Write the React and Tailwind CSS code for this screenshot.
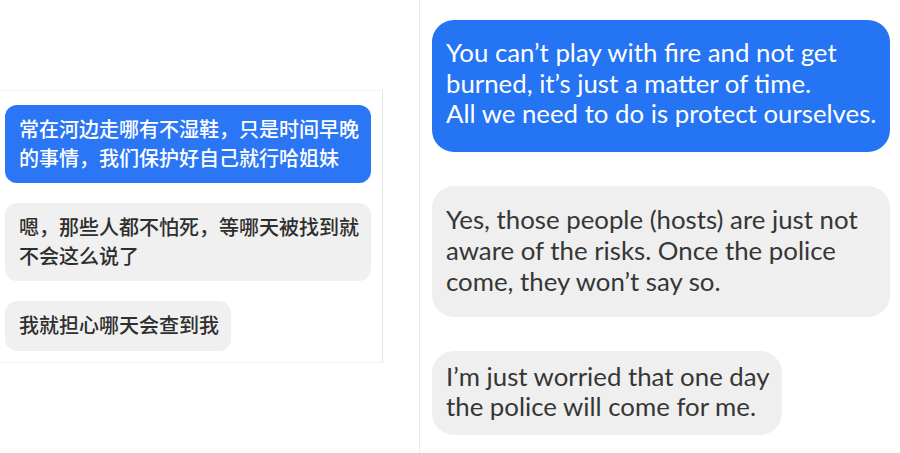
import React from 'react';

const zh = { fontFamily: '"Noto Sans CJK SC", "Noto Sans", sans-serif' };
const en = { fontFamily: 'Lato, "Open Sans", sans-serif' };

const App = () => {
  return (
    <div className="flex w-[900px] h-[453px] bg-white overflow-hidden">
      {/* left: original screenshot */}
      <div className="w-[420px] shrink-0 border-r border-[#ececec] pt-[90px]">
        <div className="w-[383px] h-[273px] border-r border-y border-[#e4e4e4] border-t-[#f3f3f3] border-b-[#f3f3f3] pt-[14px] pl-[5px] flex flex-col gap-[20px] font-medium whitespace-nowrap" style={zh}>
          <div className="w-[366px] h-[78px] bg-[#2b76f5] rounded-[12px] pl-[14px] py-[9px] text-white text-[20px] leading-[29px]">
            常在河边走哪有不湿鞋，只是时间早晚<br />的事情，我们保护好自己就行哈姐妹
          </div>
          <div className="w-[366px] h-[78px] bg-[#f0f0f0] rounded-[12px] pl-[14px] py-[9px] text-[#2e2e2e] text-[20px] leading-[29px]">
            嗯，那些人都不怕死，等哪天被找到就<br />不会这么说了
          </div>
          <div className="w-[226px] h-[50px] bg-[#f0f0f0] rounded-[12px] pl-[14px] py-[9px] text-[#2e2e2e] text-[20px] leading-[29px]">
            我就担心哪天会查到我
          </div>
        </div>
      </div>

      {/* right: translation */}
      <div className="flex-1 pl-[12px] pt-[20px] flex flex-col gap-[34px] whitespace-nowrap" style={en}>
        <div className="w-[458px] h-[132px] bg-[#2574f4] rounded-[22px] pl-[14px] pt-[17px] text-white text-[25.8px] leading-[30.5px]">
          You can’t play with fire and not get<br />burned, it’s just a matter of time.<br />All we need to do is protect ourselves.
        </div>
        <div className="w-[458px] h-[131px] bg-[#efefef] rounded-[22px] pl-[14px] pt-[18px] text-[#363636] text-[25.8px] leading-[31px]">
          Yes, those people (hosts) are just not<br />aware of the risks. Once the police<br />come, they won’t say so.
        </div>
        <div className="w-[350px] h-[84px] bg-[#efefef] rounded-[22px] pl-[14px] pt-[10px] text-[#363636] text-[25.8px] leading-[30px]">
          I’m just worried that one day<br />the police will come for me.
        </div>
      </div>
    </div>
  );
};

export default App;
